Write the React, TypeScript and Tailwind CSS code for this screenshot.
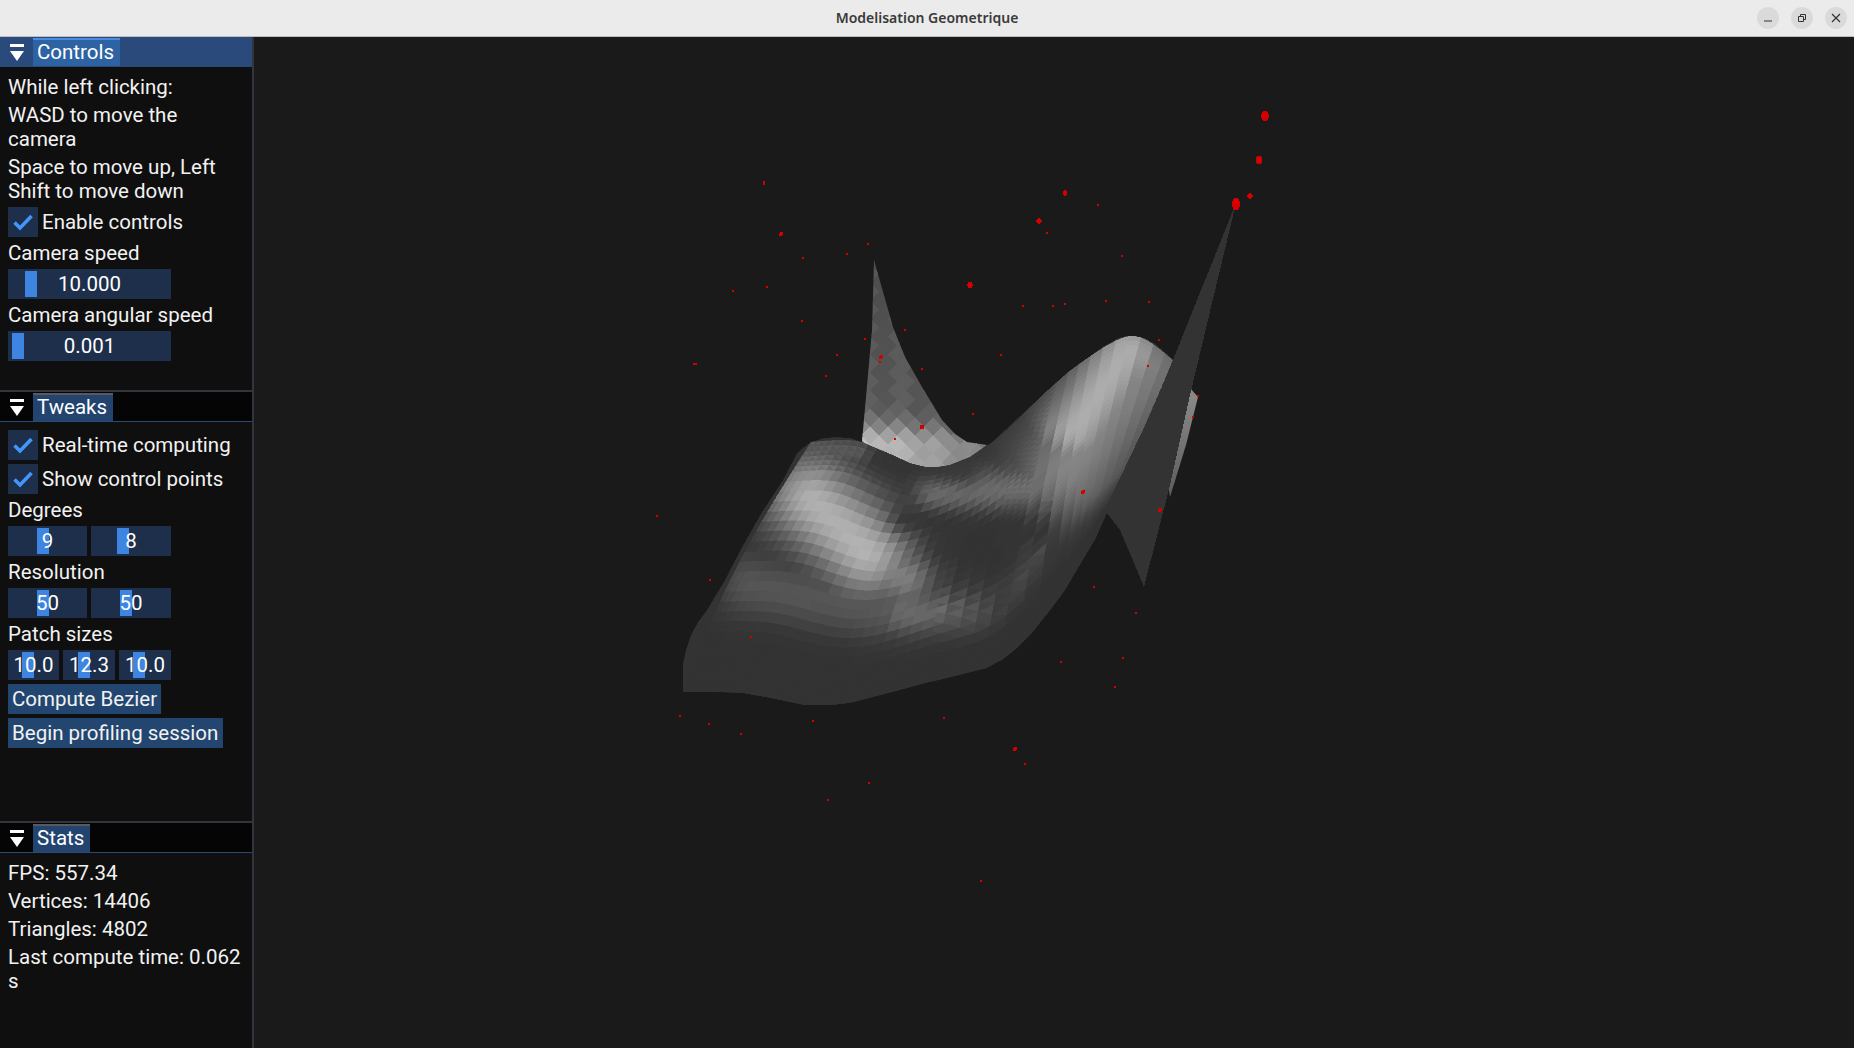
import React from "react";

type P = [number, number];

const OUTLINE: P[] = [
  [683,692],[683,663],[686,650],[691,635],[698,622],[707,610],[725,580],[742,547],[762,512],[783,480],[797,453],[804,447],[811,442],[824,438],[836,437],[850,438],[862,442],[878,449],[893,455],[910,463],[926,467],[938,467],[950,465],[970,457],[991,443],[1020,416],[1048,390],[1068,372],[1089,357],[1104,346],[1118,338],[1126,336],[1134,336],[1145,338],[1154,343],[1165,352],[1173,360],
  [1150,420],[1125,480],[1107,513],[1095,540],[1081,563],[1065,590],[1048,613],[1032,633],[1015,650],[1002,660],[987,668],[955,676],[926,683],[900,690],[869,698],[850,703],[832,705],[803,705],[770,698],[742,693],[710,692],
];
const TOP: P[] = [[811,442],[862,442],[926,467],[991,443],[1048,390],[1089,357],[1134,336],[1173,360]];
const BOTTOM: P[] = [[683,692],[742,693],[832,705],[926,683],[987,668],[1048,613],[1081,563],[1107,513]];
const FLAP: P[] = [[874,260],[872,330],[866,397],[862,441],[893,472],[950,472],[987,445],[967,442],[955,434],[942,420],[922,387],[905,357],[893,327]];
const SHEET: P[] = [[1236,203],[1173,360],[1166,377],[1150,415],[1130,457],[1112,495],[1098,530],[1107,513],[1120,530],[1134,563],[1144,587],[1170,485],[1190,395]];
const SLIVER: P[] = [[1190,388],[1198,397],[1186,445],[1170,497],[1168,485],[1188,395]];

const DOTS: [number, number, number, number][] = [
  [1265,116,3.9,5],[1259,160,3.3,3.9],[1250,196,2.8,2.8],[1236,204,4.4,6],[1065,193,2.2,2.7],[1098,205,1.5,1.5],[1039,221,2.7,2.7],[1047,233,1.5,1.5],[1122,256,1.5,1.5],[764,183,1.5,2],[781,234,2,2],[868,244,1,1],[847,254,1,1.5],[803,258,1,1],[733,291,1.5,1.5],[767,287,1,1.5],[970,285,2.7,3.2],[1023,306,1.5,1.5],[1053,306,1,1.5],[1065,304,1,1],[1106,301,1,1],[1149,302,1.5,1.5],[802,321,1,1],[905,330,1,1],[865,339,1,1],[1159,340,1,1],[837,355,1,1.5],[881,357,2,2],[880,362,1,1],[1001,355,1,1],[695,364,2,1.5],[922,369,1,1],[826,376,1,1.5],[1148,366,1.5,1],[1198,396,1,1],[1193,417,1,1],[973,414,0.7,1],[922,427,2.5,2.5],[895,439,1.5,1.5],[1083,492,2,2],[1160,510,2,2],[657,516,1.5,1.5],[710,580,1.5,1],[751,637,1.5,1.5],[1094,587,1,1],[1136,613,1,1],[1061,662,1,1],[1123,658,1.5,1],[1115,687,1,1],[680,716,1,1],[709,724,1,1],[741,734,1.5,1],[813,721,1,1.5],[944,718,1,1],[1015,749,2,2],[1025,764,1.5,1],[869,783,1.5,1.5],[828,800,1,1],[981,881,1,1.5],
];

const pts = (a: P[]) => a.map((p) => p.join(",")).join(" ");

function curve(c: P[], t: number): P {
  const n = c.length - 1;
  const f = Math.min(t * n, n - 1e-6);
  const i = Math.floor(f);
  const s = f - i;
  const p0 = c[Math.max(i - 1, 0)], p1 = c[i], p2 = c[i + 1], p3 = c[Math.min(i + 2, n)];
  const cr = (a: number, b: number, d: number, e: number) =>
    0.5 * (2 * b + (d - a) * s + (2 * a - 5 * b + 4 * d - e) * s * s + (3 * b - a - 3 * d + e) * s * s * s);
  return [cr(p0[0], p1[0], p2[0], p3[0]), cr(p0[1], p1[1], p2[1], p3[1])];
}

function capsule(x: number, y: number, x1: number, y1: number, x2: number, y2: number, w: number) {
  const dx = x2 - x1, dy = y2 - y1;
  const t = Math.max(0, Math.min(1, ((x - x1) * dx + (y - y1) * dy) / (dx * dx + dy * dy)));
  const d = Math.hypot(x - x1 - dx * t, y - y1 - dy * t);
  return Math.exp(-(d * d) / (w * w));
}

function shade(x: number, y: number, u: number) {
  const v = [
    125 * capsule(x, y, 812, 500, 866, 552, 44),
    34 * capsule(x, y, 750, 585, 880, 612, 30),
    36 * capsule(x, y, 810, 447, 860, 452, 13),
    118 * capsule(x, y, 1128, 350, 1075, 430, 36),
    78 * capsule(x, y, 1140, 365, 1068, 470, 50),
    56 * capsule(x, y, 935, 495, 1050, 486, 22),
    52 * capsule(x, y, 905, 612, 985, 628, 28),
    72 * capsule(x, y, 860, 562, 905, 578, 28),
    26 * capsule(x, y, 1035, 555, 1000, 625, 14),
  ];
  const mx = Math.max(...v);
  const sum = v.reduce((a, b) => a + b, 0);
  let g = mx + 0.06 * (sum - mx);
  g *= 1 - 0.85 * capsule(x, y, 905, 520, 1040, 532, 15);
  g *= 1 - 0.55 * capsule(x, y, 940, 548, 1020, 560, 14);
  g *= 1 - 0.7 * capsule(x, y, 880, 462, 965, 474, 13);
  if (u > 0.7) g *= Math.max(0, 1 - (u - 0.7) / 0.18);
  return g;
}

type Tri = { p: string; f: string };
const TRIS: Tri[] = (() => {
  const out: Tri[] = [];
  const N = 50;
  const at = (u: number, v: number): P => {
    const a = curve(TOP, v), b = curve(BOTTOM, v);
    const bend = Math.sin(u * Math.PI) * (1 - v) * -10;
    return [a[0] + (b[0] - a[0]) * u + bend, a[1] + (b[1] - a[1]) * u];
  };
  const col = (g: number) => {
    const k = Math.round(Math.max(51, Math.min(185, 51 + g)));
    return `rgb(${k},${k},${k})`;
  };
  for (let i = 0; i < N; i++) {
    for (let j = 0; j < N; j++) {
      const lowCenter = i >= 24 && j >= 21 && j < 34;
      const leftBands = !lowCenter && j < 26 && i >= 6;
      const rightBands = !lowCenter && j >= 30;
      const qi = lowCenter || leftBands ? i - (i % 2) + 0.5 : i;
      const qj = lowCenter || rightBands ? j - (j % 2) + 0.5 : j;
      const a = at(i / N, j / N), b = at(i / N, (j + 1) / N), c = at((i + 1) / N, (j + 1) / N), d = at((i + 1) / N, j / N);
      const m = at((qi + 0.5) / N, (qj + 0.5) / N);
      const base = shade(m[0], m[1], (qi + 0.5) / N);
      if (lowCenter) {
        const amp = Math.min(6, base * 0.12);
        const ii = i % 2, jj = j % 2;
        const s1 = jj >= ii ? amp : -amp;
        const s2 = jj > ii ? amp : -amp;
        out.push({ p: pts([a, b, c]), f: col(base + s1) });
        out.push({ p: pts([a, c, d]), f: col(base + s2) });
      } else {
        const fine = !leftBands && !rightBands;
        const amp = fine ? Math.min(4, base * 0.08) : 0;
        out.push({ p: pts([a, b, c]), f: col(base + amp) });
        out.push({ p: pts([a, c, d]), f: col(base - amp) });
      }
    }
  }
  return out;
})();

const DIAMONDS: Tri[] = (() => {
  const out: Tri[] = [];
  for (let j = 0; j < 27; j++) {
    for (let i = 0; i < 9; i++) {
      const cx = 852 + i * 18 + (j % 2) * 9;
      const cy = 256 + j * 9;
      const low = Math.max(0, Math.min(1, (cy - 400) / 40));
      let g = 82 + 3 * Math.max(0, (cy - 300) / 40) + 95 * low * low - Math.max(0, cx - 880) * 0.6 * low;
      g += (i + j) % 2 ? 5 : -4;
      const k = Math.round(Math.max(70, Math.min(200, g)));
      out.push({ p: pts([[cx, cy - 10], [cx + 9, cy], [cx, cy + 10], [cx - 9, cy]]), f: `rgb(${k},${k},${k})` });
    }
  }
  return out;
})();

function Surface() {
  return (
    <svg viewBox="254 37 1600 1011" className="block w-full h-full">
      <defs>
        <clipPath id="flap"><polygon points={pts(FLAP)} /></clipPath>
        <clipPath id="body"><polygon points={pts(OUTLINE)} /></clipPath>
        <linearGradient id="sl" x1="0" y1="0" x2="0" y2="1">
          <stop offset="0" stopColor="#8c8c8c" />
          <stop offset="1" stopColor="#5c5c5c" />
        </linearGradient>
      </defs>
      <g clipPath="url(#flap)" shapeRendering="crispEdges">
        {DIAMONDS.map((d, i) => <polygon key={i} points={d.p} fill={d.f} />)}
      </g>
      <polygon points={pts(SLIVER)} fill="url(#sl)" />
      <g clipPath="url(#body)" shapeRendering="crispEdges">
        <polygon points={pts(OUTLINE)} fill="#333333" />
        {TRIS.map((d, i) => <polygon key={i} points={d.p} fill={d.f} stroke={d.f} strokeWidth="0.4" />)}
      </g>
      <polygon points={pts(SHEET)} fill="#333333" shapeRendering="crispEdges" />
      {DOTS.map(([x, y, a, b], i) => (
        <ellipse key={i} cx={x} cy={y} rx={a} ry={b} fill="#d40000" shapeRendering="crispEdges" />
      ))}
    </svg>
  );
}

function Header({ title, active, tabW }: { title: string; active?: boolean; tabW: string }) {
  return (
    <div className={`h-[30px] shrink-0 flex border-b border-[#2a4a76] ${active ? "bg-[#294a7a]" : "bg-[#050505]"}`}>
      <div className="w-[33px] flex flex-col items-center pt-[7px]">
        <div className="w-[14px] h-[3px] bg-white" />
        <svg width="16" height="10" viewBox="0 0 16 10" className="mt-[4px]"><polygon points="1,0 15,0 8,10" fill="#fff" /></svg>
      </div>
      <div className={`${tabW} mt-[1px] px-[4px] text-[20.5px] leading-[25px] text-white border-t-2 ${active ? "bg-[#2e63a3] border-[#4a8be0]" : "bg-[#22446f] border-[#5a5a5a]"}`}>
        {title}
      </div>
    </div>
  );
}

function Slider({ w, value, grab }: { w: string; value: string; grab: string }) {
  return (
    <div className={`relative h-[30px] bg-[#1d2f4a] flex items-center justify-center ${w}`}>
      <div className={`absolute top-[2px] h-[26px] w-[12px] bg-[#3d85e0] ${grab}`} />
      <span className="relative text-white">{value}</span>
    </div>
  );
}

function Check({ label }: { label: string }) {
  return (
    <div className="flex items-center h-[30px] gap-[4px]">
      <div className="w-[30px] h-[30px] bg-[#1d2f4a] flex items-center justify-center">
        <svg width="22" height="18" viewBox="0 0 22 18"><path d="M2.5 9.5 L8 15 L19.5 3" fill="none" stroke="#4296fa" strokeWidth="3.6" /></svg>
      </div>
      <span>{label}</span>
    </div>
  );
}

function Btn({ w, label }: { w: string; label: string }) {
  return <div className={`h-[30px] bg-[#234670] px-[4px] leading-[30px] whitespace-nowrap ${w}`}>{label}</div>;
}

export default function App() {
  return (
    <div className="w-[1854px] h-[1048px] overflow-hidden flex flex-col bg-[#1a1a1a] text-[20.5px] leading-[24px] text-[#f2f2f2] font-['Roboto',sans-serif]">
      <div className="h-[37px] shrink-0 relative flex items-center justify-center bg-[#ebebeb] border-b border-[#bdbdbd]">
        <span className="text-[#3a3a3a] text-[14px] font-semibold font-['Noto_Sans',sans-serif]">Modelisation Geometrique</span>
        <div className="absolute right-[7px] top-[7px] flex gap-[12px]">
          <div className="w-[22px] h-[22px] rounded-full bg-[#dadada] flex items-center justify-center">
            <svg width="10" height="10" viewBox="0 0 10 10"><path d="M1 8 H9" stroke="#333" strokeWidth="1" /></svg>
          </div>
          <div className="w-[22px] h-[22px] rounded-full bg-[#dadada] flex items-center justify-center">
            <svg width="10" height="10" viewBox="0 0 10 10"><path d="M1.5 3.5 H6.5 V8.5 H1.5 Z M3.5 3.5 V1.5 H8.5 V6.5 H6.5" fill="none" stroke="#333" strokeWidth="1" /></svg>
          </div>
          <div className="w-[22px] h-[22px] rounded-full bg-[#dadada] flex items-center justify-center">
            <svg width="10" height="10" viewBox="0 0 10 10"><path d="M1 1 L9 9 M9 1 L1 9" stroke="#333" strokeWidth="1.2" /></svg>
          </div>
        </div>
      </div>
      <div className="flex-1 flex min-h-0">
        <div className="w-[254px] shrink-0 flex flex-col bg-[#0f0f0f] border-r-2 border-[#34343c]">
          <section className="h-[353px] shrink-0 flex flex-col">
            <Header title="Controls" active tabW="w-[87px]" />
            <div className="flex flex-col gap-[4px] px-[8px] pt-[8px]">
              <p>While left clicking:</p>
              <p>WASD to move the camera</p>
              <p>Space to move up, Left Shift to move down</p>
              <Check label="Enable controls" />
              <p>Camera speed</p>
              <Slider w="w-[163px]" value="10.000" grab="left-[17px]" />
              <p>Camera angular speed</p>
              <Slider w="w-[163px]" value="0.001" grab="left-[4px]" />
            </div>
          </section>
          <div className="h-[2px] shrink-0 bg-[#34343c]" />
          <section className="h-[429px] shrink-0 flex flex-col">
            <Header title="Tweaks" tabW="w-[80px]" />
            <div className="flex flex-col gap-[4px] px-[8px] pt-[8px]">
              <Check label="Real-time computing" />
              <Check label="Show control points" />
              <p>Degrees</p>
              <div className="flex gap-[4px]">
                <Slider w="w-[79px]" value="9" grab="left-[29px]" />
                <Slider w="w-[80px]" value="8" grab="left-[26px]" />
              </div>
              <p>Resolution</p>
              <div className="flex gap-[4px]">
                <Slider w="w-[79px]" value="50" grab="left-[29px]" />
                <Slider w="w-[80px]" value="50" grab="left-[29px]" />
              </div>
              <p>Patch sizes</p>
              <div className="flex gap-[4px]">
                <Slider w="w-[51px]" value="10.0" grab="left-[14px]" />
                <Slider w="w-[52px]" value="12.3" grab="left-[15px]" />
                <Slider w="w-[52px]" value="10.0" grab="left-[14px]" />
              </div>
              <Btn w="w-[153px]" label="Compute Bezier" />
              <Btn w="w-[215px]" label="Begin profiling session" />
            </div>
          </section>
          <div className="h-[2px] shrink-0 bg-[#34343c]" />
          <section className="flex-1 flex flex-col">
            <Header title="Stats" tabW="w-[57px]" />
            <div className="flex flex-col gap-[4px] px-[8px] pt-[8px]">
              <p>FPS: 557.34</p>
              <p>Vertices: 14406</p>
              <p>Triangles: 4802</p>
              <p>Last compute time: 0.062 s</p>
            </div>
          </section>
        </div>
        <div className="flex-1 min-w-0">
          <Surface />
        </div>
      </div>
    </div>
  );
}
